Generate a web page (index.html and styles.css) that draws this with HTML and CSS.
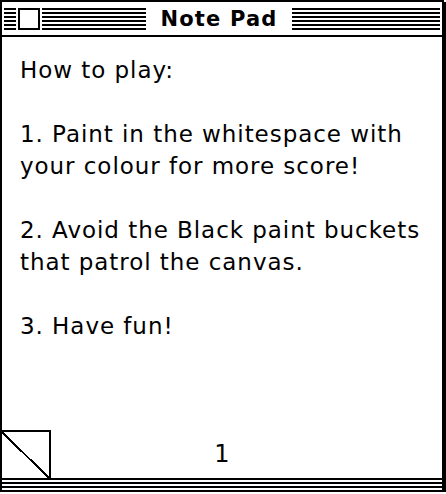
FILE: index.html
```html
<!DOCTYPE html>
<html>
<head>
<meta charset="utf-8">
<link rel="stylesheet" href="styles.css">
<title>Note Pad</title>
</head>
<body>
<div class="window">
  <div class="titlebar">
    <div class="stripes">
      <div class="lead"></div>
      <div class="closewrap"><div class="closebox"></div></div>
      <div class="mid"></div>
      <div class="title">Note Pad</div>
      <div class="rest"></div>
    </div>
  </div>
  <div class="page">
    <div class="text">
      <p>How to play:</p>
      <p>&nbsp;</p>
      <p>1. Paint in the whitespace with</p>
      <p>your colour for more score!</p>
      <p>&nbsp;</p>
      <p>2. Avoid the Black paint buckets</p>
      <p>that patrol the canvas.</p>
      <p>&nbsp;</p>
      <p>3. Have fun!</p>
    </div>
    <div class="footer">
      <div class="curl">
        <svg width="47" height="46" viewBox="0 0 47 46" shape-rendering="crispEdges">
          <line x1="0" y1="0" x2="47" y2="46" stroke="#000" stroke-width="2"/>
        </svg>
      </div>
      <div class="pagenum">1</div>
      <div class="spacer"></div>
    </div>
  </div>
  <div class="pages"></div>
</div>
</body>
</html>
```

FILE: styles.css
```css
html, body {
  margin: 0;
  padding: 0;
  background: #fff;
}

.window {
  box-sizing: border-box;
  width: 444px;
  height: 492px;
  border: 2px solid #000;
  box-shadow: 2px 2px 0 #000;
  display: flex;
  flex-direction: column;
  background: #fff;
  color: #000;
}

.titlebar {
  border-bottom: 2px solid #000;
  padding: 6px 2px 0 2px;
  height: 27px;
}

.stripes {
  height: 22px;
  display: flex;
  background: repeating-linear-gradient(to bottom, #000 0 2px, #fff 2px 4px);
}

.lead { width: 12px; }

.closewrap {
  background: #fff;
  padding: 0 2px;
}

.closebox {
  box-sizing: border-box;
  width: 22px;
  height: 22px;
  border: 2px solid #000;
  background: #fff;
}

.mid { width: 104px; }

.title {
  width: 146px;
  background: #fff;
  text-align: center;
  font-family: "DejaVu Sans", sans-serif;
  font-weight: bold;
  font-size: 21px;
  letter-spacing: 1.2px;
  line-height: 22px;
}

.rest { flex: 1; }

.page {
  flex: 1;
  display: flex;
  flex-direction: column;
  border-bottom: 2px solid #000;
}

.text {
  flex: 1;
  padding: 17px 0 0 18px;
  font-family: "DejaVu Sans", sans-serif;
  font-size: 23px;
  letter-spacing: 0.95px;
  line-height: 32px;
}

.text p {
  margin: 0;
  white-space: nowrap;
}

.footer {
  height: 48px;
  display: grid;
  grid-template-columns: 49px 1fr 49px;
}

.curl {
  box-sizing: border-box;
  border-top: 2px solid #000;
  border-right: 2px solid #000;
  display: flex;
}

.curl svg { display: block; }

.pagenum {
  text-align: center;
  font-family: "DejaVu Sans", sans-serif;
  font-size: 24px;
  line-height: 48px;
}

.pages {
  height: 10px;
  background: repeating-linear-gradient(to bottom, #fff 0 2px, #000 2px 4px);
}
```
